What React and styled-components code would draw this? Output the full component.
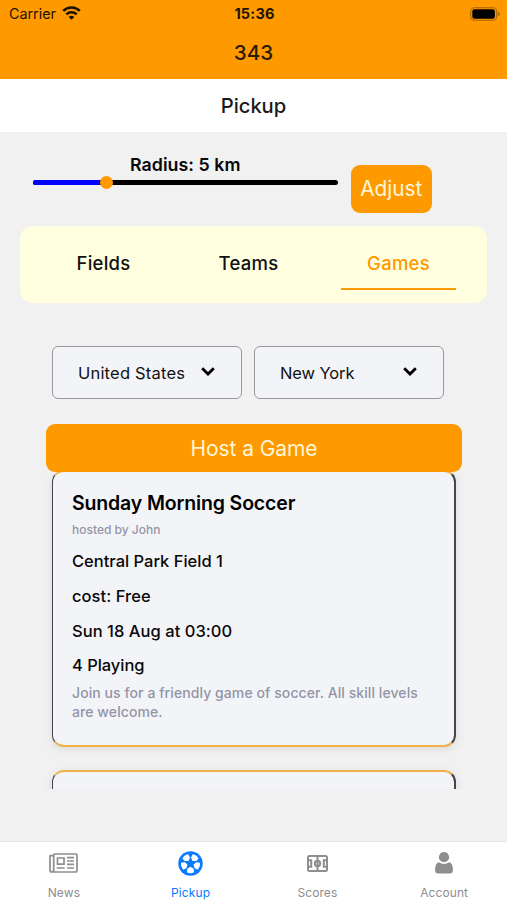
import styled, { createGlobalStyle } from "styled-components";

const sf = `Inter, "Liberation Sans", sans-serif`;

const GAMES = [
  {
    title: "Sunday Morning Soccer",
    host: "hosted by John",
    details: [
      { text: "Central Park Field 1", spacing: 0 },
      { text: "cost: Free", spacing: 0.05 },
      { text: "Sun 18 Aug at 03:00", spacing: 0.04 },
      { text: "4 Playing", spacing: -0.05 },
    ],
    description:
      "Join us for a friendly game of soccer. All skill levels are welcome.",
  },
];

const WifiIcon = () => (
  <svg width="19" height="14" viewBox="0 0 19 14" fill="none" stroke="#1c1200">
    <path d="M1.2 4.9A11.8 11.8 0 0 1 17.8 4.9" strokeWidth="2.7" />
    <path d="M4.3 8.3A7.4 7.4 0 0 1 14.7 8.3" strokeWidth="2.5" />
    <path
      d="M9.5 13.8L6.7 11A4 4 0 0 1 12.3 11Z"
      fill="#1c1200"
      stroke="none"
    />
  </svg>
);

const BatteryIcon = () => (
  <svg width="30" height="14" viewBox="0 0 30 14">
    <rect
      x="0.7"
      y="0.7"
      width="26"
      height="12.6"
      rx="3.8"
      fill="none"
      stroke="#a86500"
      strokeWidth="1.1"
    />
    <rect x="2.3" y="2.3" width="22.6" height="9.4" rx="2.2" fill="#000" />
    <path d="M28 4.7Q29.8 5.3 29.8 7T28 9.3Z" fill="#a86500" />
  </svg>
);

const ChevronIcon = () => (
  <svg
    width="14"
    height="9"
    viewBox="0 0 14 9"
    fill="none"
    stroke="#000"
    strokeWidth="2.9"
  >
    <path d="M1.2 1.3L7 7L12.8 1.3" />
  </svg>
);

const NewsIcon = () => (
  <svg
    width="29"
    height="20"
    viewBox="0 0 29 20"
    fill="none"
    stroke="#8e8e8f"
    strokeWidth="1.7"
  >
    <path d="M4.7 1H27Q28 1 28 2V17.3Q28 19 26.3 19H2.8Q1 19 1 17V3.2Q1 2.6 1.6 2.6H4.7M4.7 1V16.8Q4.7 19 2.8 19" />
    <path d="M8.5 5H15V11.2H8.5ZM18 4.6H25M18 8H25M18 11.4H25M7.6 15H15.7M18 15H25" />
  </svg>
);

const BallIcon = () => (
  <svg width="25" height="25" viewBox="0 0 25 25">
    <circle cx="12.5" cy="12.5" r="12.2" fill="#0a7aff" />
    {[36, 108, 180, 252, 324].map((angle) => (
      <path
        key={angle}
        d="M12.5 8.6L9.9 6.9L9.6 4Q12.5 2.7 15.4 4L15.1 6.9Z"
        transform={`rotate(${angle} 12.5 12.5)`}
        fill="#fff"
        stroke="#fff"
        strokeWidth="1.2"
        strokeLinejoin="round"
      />
    ))}
  </svg>
);

const FieldIcon = () => (
  <svg
    width="21"
    height="17"
    viewBox="0 0 21 17"
    fill="none"
    stroke="#8e8e8f"
    strokeWidth="2"
  >
    <rect x="1" y="1" width="19" height="15" rx="1.5" />
    <path d="M10.5 1V16M1 5.2H4.2V11.8H1M20 5.2H16.8V11.8H20" />
    <circle cx="10.5" cy="8.5" r="2.7" />
  </svg>
);

const PersonIcon = () => (
  <svg width="18" height="22" viewBox="0 0 18 22" fill="#8e8e8f">
    <circle cx="9" cy="5.2" r="5.1" />
    <path d="M3.8 10.3Q9 13.6 14.2 10.3Q17.9 11 17.9 18.2Q17.9 21.5 14.8 21.5H3.2Q0.1 21.5 0.1 18.2Q0.1 11 3.8 10.3Z" />
  </svg>
);

const App = () => {
  return (
    <>
      <GlobalStyle />
      <Screen>
        <Header>
          <StatusBar>
            <Carrier>
              Carrier
              <WifiIcon />
            </Carrier>
            <Clock>15:36</Clock>
            <BatteryWrap>
              <BatteryIcon />
            </BatteryWrap>
          </StatusBar>
          <AppTitle>343</AppTitle>
        </Header>
        <PageTitle>Pickup</PageTitle>

        <Content>
          <RadiusRow>
            <RadiusControl>
              <RadiusLabel>Radius: 5 km</RadiusLabel>
              <Track>
                <TrackFill />
                <Thumb />
              </Track>
            </RadiusControl>
            <AdjustButton>Adjust</AdjustButton>
          </RadiusRow>

          <Tabs>
            <Tab>Fields</Tab>
            <Tab>Teams</Tab>
            <Tab $active>Games</Tab>
          </Tabs>

          <Selects>
            <Select $spacing={0.2}>
              United States
              <ChevronIcon />
            </Select>
            <Select $spacing={-0.1}>
              New York
              <ChevronIcon />
            </Select>
          </Selects>

          <HostButton>Host a Game</HostButton>

          <GameList>
            {GAMES.map((game) => (
              <GameCard key={game.title}>
                <GameTitle>{game.title}</GameTitle>
                <GameHost>{game.host}</GameHost>
                {game.details.map((detail) => (
                  <GameDetail key={detail.text} $spacing={detail.spacing}>
                    {detail.text}
                  </GameDetail>
                ))}
                <Description>{game.description}</Description>
              </GameCard>
            ))}
            <GameCard />
          </GameList>
        </Content>

        <BottomNav>
          <NavItem>
            <NewsIcon />
            <NavLabel>News</NavLabel>
          </NavItem>
          <NavItem $active>
            <BallIcon />
            <NavLabel>Pickup</NavLabel>
          </NavItem>
          <NavItem>
            <FieldIcon />
            <NavLabel>Scores</NavLabel>
          </NavItem>
          <NavItem>
            <PersonIcon />
            <NavLabel>Account</NavLabel>
          </NavItem>
        </BottomNav>
      </Screen>
    </>
  );
};

export default App;

const GlobalStyle = createGlobalStyle`
  * {
    box-sizing: border-box;
  }

  body {
    margin: 0;
    font-family: ${sf};
    color: #111;
  }

  button {
    border: none;
    padding: 0;
    font-family: inherit;
  }
`;

const Screen = styled.div`
  display: flex;
  flex-direction: column;
  width: 507px;
  height: 900px;
  overflow: hidden;
  background-color: #f1f1f1;
`;

const Header = styled.header`
  height: 79px;
  flex-shrink: 0;
  background-color: #ff9900;
`;

const StatusBar = styled.div`
  display: grid;
  grid-template-columns: 1fr auto 1fr;
  align-items: center;
  height: 27px;
  padding: 0 7px 0 9px;
  color: #1c1200;
`;

const Carrier = styled.span`
  display: flex;
  align-items: center;
  gap: 6px;
  font-size: 14.3px;

  svg {
    margin-bottom: 2px;
  }
`;

const Clock = styled.span`
  font-size: 14.5px;
  font-weight: 650;
  letter-spacing: 0.2px;
`;

const BatteryWrap = styled.span`
  display: flex;
  justify-content: flex-end;
`;

const AppTitle = styled.h1`
  margin: 0;
  text-align: center;
  font-size: 20.6px;
  line-height: 51px;
  font-weight: 550;
  color: #2a1d08;
`;

const PageTitle = styled.h2`
  height: 53px;
  flex-shrink: 0;
  margin: 0;
  background-color: #fff;
  text-align: center;
  font-size: 20.2px;
  line-height: 53px;
  font-weight: 550;
  letter-spacing: -0.05px;
  color: #1a1a1a;
`;

const Content = styled.main`
  flex: 1;
  min-height: 0;
  display: flex;
  flex-direction: column;
`;

const RadiusRow = styled.div`
  display: flex;
  gap: 12.5px;
  height: 94px;
  padding: 20px 0 0 32.5px;
`;

const RadiusControl = styled.div`
  width: 305.5px;
  padding-top: 12px;
`;

const RadiusLabel = styled.div`
  height: 16px;
  line-height: 0;
  padding-top: 1px;
  text-align: center;
  font-size: 17.8px;
  font-weight: 600;
  letter-spacing: 0.05px;
  color: #080808;
`;

const Track = styled.div`
  display: flex;
  align-items: center;
  height: 5px;
  border-radius: 3px;
  background-color: #000;
`;

const TrackFill = styled.div`
  width: 67.5px;
  height: 5px;
  border-radius: 3px 0 0 3px;
  background-color: #0000ff;
`;

const Thumb = styled.div`
  width: 13px;
  height: 13px;
  flex-shrink: 0;
  border-radius: 50%;
  background-color: #ff9900;
`;

const AdjustButton = styled.button`
  width: 81.5px;
  height: 48px;
  margin-top: 12.6px;
  border-radius: 9px;
  background-color: #ff9900;
  color: #fff6d5;
  font-size: 20.8px;
`;

const Tabs = styled.nav`
  display: flex;
  justify-content: space-between;
  height: 77px;
  margin: 0 20px;
  padding: 10px 31px 12px 26px;
  border-radius: 13px;
  background-color: #ffffe0;
`;

const Tab = styled.div`
  width: 115px;
  height: 54px;
  border-bottom: 2.5px solid ${(props) => (props.$active ? "#ff9900" : "transparent")};
  text-align: center;
  line-height: 55px;
  font-size: 18.5px;
  font-weight: 500;
  letter-spacing: 0.25px;
  color: ${(props) => (props.$active ? "#ff9900" : "#111")};

  &:nth-child(2) {
    margin-right: 5px;
  }
`;

const Selects = styled.div`
  display: flex;
  gap: 12px;
  margin: 43px 0 0 52px;
`;

const Select = styled.div`
  display: flex;
  align-items: center;
  justify-content: space-between;
  width: 190px;
  height: 53px;
  padding: 1px 26px 0 25px;
  border: 1.5px solid #999;
  border-radius: 6px;
  background-color: #f3f4f8;
  font-size: 16.5px;
  letter-spacing: ${(props) => props.$spacing}px;

  svg {
    margin-bottom: 3px;
  }
`;

const HostButton = styled.button`
  position: relative;
  z-index: 1;
  width: 416px;
  height: 48px;
  flex-shrink: 0;
  margin: 25px 0 0 46px;
  border-radius: 9px;
  background-color: #ff9900;
  color: #fff6d5;
  font-size: 21px;
  letter-spacing: -0.1px;
`;

const GameList = styled.section`
  height: 319px;
  margin: -2px 0 0 40px;
  padding: 0 12px;
  width: 428px;
  overflow: hidden;
`;

const GameCard = styled.article`
  height: 277px;
  margin-bottom: 23px;
  padding: 19px 18px 19px 19px;
  border: 2px solid #44464a;
  border-left-width: 1.5px;
  border-top-color: #f0b04c;
  border-bottom-color: #f0b04c;
  border-radius: 12px;
  background-color: #f3f4f8;
  box-shadow: 0 2px 8px rgba(0, 0, 0, 0.1);
`;

const GameTitle = styled.h3`
  margin: 0;
  font-size: 19.5px;
  line-height: 24px;
  font-weight: 600;
  letter-spacing: -0.15px;
  color: #000;
`;

const GameHost = styled.p`
  margin: 5px 0 9.4px;
  font-size: 12px;
  line-height: 20px;
  font-weight: 500;
  color: #9394a6;
`;

const GameDetail = styled.p`
  margin: 0 0 10.6px;
  font-size: 16.5px;
  line-height: 24px;
  font-weight: 500;
  letter-spacing: ${(props) => props.$spacing}px;
  color: #080808;
`;

const Description = styled.p`
  margin: -5px 0 0;
  width: 360px;
  font-size: 14px;
  line-height: 19.5px;
  font-weight: 500;
  letter-spacing: 0.08px;
  color: #9394a6;
`;

const BottomNav = styled.nav`
  display: grid;
  grid-template-columns: repeat(4, 1fr);
  height: 59px;
  flex-shrink: 0;
  border-top: 1px solid #e8e8e8;
  background-color: #fff;
`;

const NavItem = styled.div`
  display: grid;
  grid-template-rows: 42px 16px;
  padding-left: 1px;
  justify-items: center;
  align-items: center;
  color: ${(props) => (props.$active ? "#0a7aff" : "#8e8e8f")};
`;

const NavLabel = styled.span`
  padding-top: 1px;
  font-size: 12px;
  line-height: 18px;
  letter-spacing: 0.1px;
`;
